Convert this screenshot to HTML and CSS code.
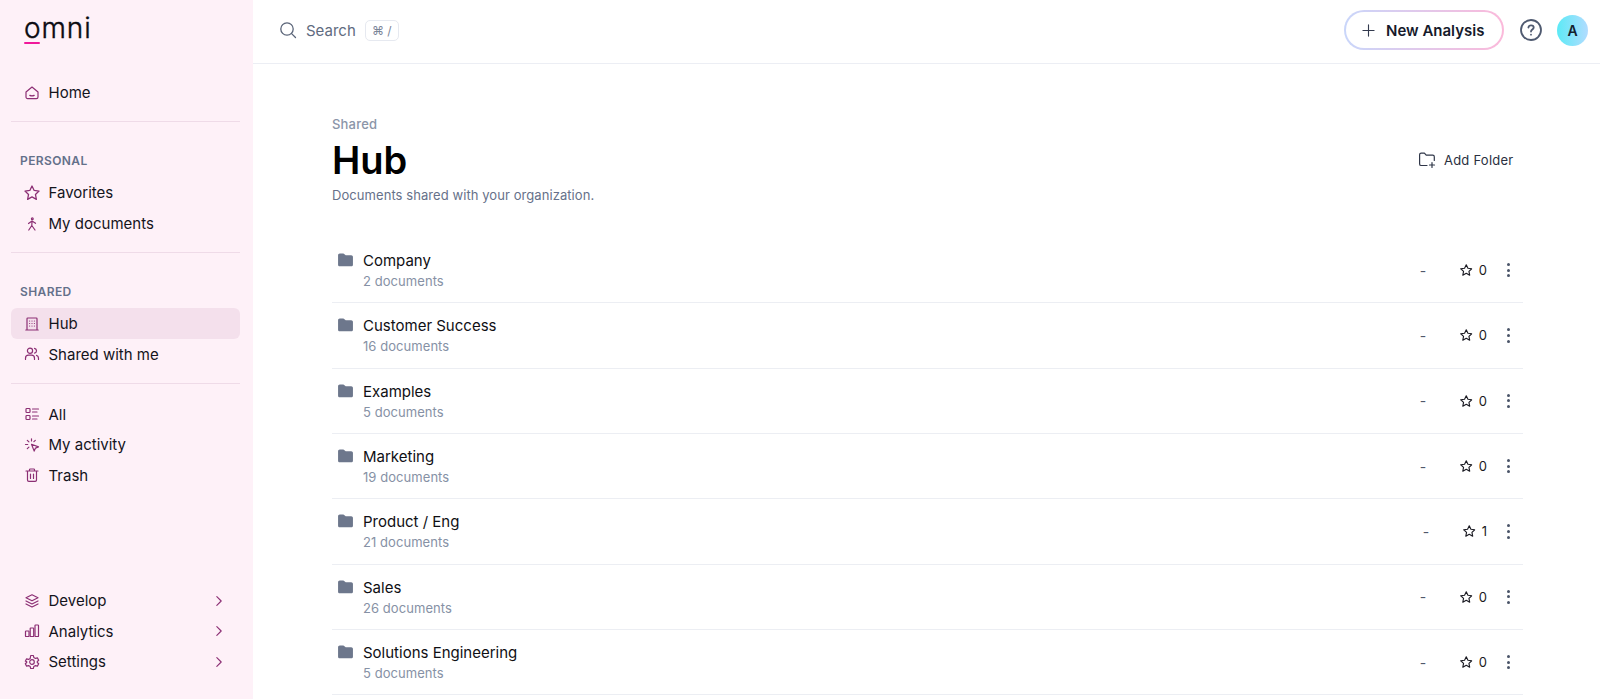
FILE: index.html
```html
<!DOCTYPE html>
<html lang="en">
<head>
<meta charset="utf-8">
<title>Hub - Omni</title>
<link rel="stylesheet" href="styles.css">
</head>
<body>
<svg class="defs" aria-hidden="true">
  <symbol id="i-star" viewBox="2 2 20 20"><path d="M12 3.200l2.700 5.600 6.100.8-4.500 4.200 1.200 6.100-5.500-3-5.500 3 1.200-6.100-4.500-4.200 6.100-.8z"/></symbol>
  <symbol id="i-chev" viewBox="0 0 16 16"><path d="M5.500 3l5 5-5 5"/></symbol>
  <symbol id="i-folder" viewBox="0 0 16 16"><path d="M1 3.100C1 2.200 1.700 1.500 2.600 1.500h3.200c.5 0 .9.2 1.200.5L8.200 3.100h5.200c.9 0 1.600.7 1.600 1.600v7.200c0 .9-.7 1.600-1.600 1.600H2.600c-.9 0-1.600-.7-1.600-1.600z"/></symbol>
</svg>
<div class="app">
  <aside class="sidebar">
    <div class="logo"><span class="logo-word">omni</span><span class="logo-bar"></span></div>
    <nav class="group">
      <a class="item"><svg class="ico" viewBox="0 0 16 16"><path d="M2 7l6-5 6 5v5c0 .9-.7 1.600-1.600 1.600H3.600C2.700 13.600 2 12.900 2 12z"/><path d="M5.800 10.400c1.300.6 3.100.6 4.400 0"/></svg>Home</a>
    </nav>
    <nav class="group">
      <div class="label">PERSONAL</div>
      <a class="item"><svg class="ico ico-star"><use href="#i-star"/></svg>Favorites</a>
      <a class="item"><svg class="ico" viewBox="0 0 16 16"><circle cx="8.300" cy="2.800" r=".9"/><path d="M4.500 7.500L8 5l3.500 2.300M8 5l-.2 4.500M7.800 9.500L4.800 14M7.800 9.500l3.200 4.500"/></svg>My documents</a>
    </nav>
    <nav class="group">
      <div class="label">SHARED</div>
      <a class="item active"><svg class="ico" viewBox="0 0 16 16"><path d="M3 14V2.800c0-.5.300-.8.800-.8h8.400c.5 0 .8.300.8.800V14M1.800 14h12.400"/><path class="dots" d="M5.600 5h.01M8 5h.01M10.400 5h.01M5.600 7.500h.01M8 7.500h.01M10.400 7.500h.01M5.600 10h.01M8 10h.01M10.400 10h.01"/></svg>Hub</a>
      <a class="item"><svg class="ico" viewBox="0 0 16 16"><circle cx="6" cy="4.800" r="2.600"/><path d="M1.500 13.500v-1.300c0-1.700 1.300-3 3-3h3c1.700 0 3 1.300 3 3v1.300M10.500 2.400c1.200.3 2 1.300 2 2.400s-.8 2.100-2 2.400M12.500 9.400c1.200.4 2 1.500 2 2.800v1.300"/></svg>Shared with me</a>
    </nav>
    <nav class="group plain">
      <a class="item"><svg class="ico" viewBox="0 0 16 16"><rect x="2" y="2.500" width="4" height="4" rx=".8"/><rect x="2" y="9.500" width="4" height="4" rx=".8"/><path d="M8.500 3h6M8.500 6h4.500M8.500 10h6M8.500 13h4.500"/></svg>All</a>
      <a class="item"><svg class="ico" viewBox="0 0 16 16"><path d="M7.500 1.800v2.200M3.300 3.300l1.600 1.600M1.500 7.500h2.200M3.300 11.700l1.600-1.600M11.300 3.300l-1.400 1.400"/><path d="M7.500 7.300l7 2.600-3 1.200-1.300 3z"/></svg>My activity</a>
      <a class="item"><svg class="ico" viewBox="0 0 16 16"><path d="M2 4h12M5.500 4V2.800c0-.5.300-.8.800-.8h3.400c.5 0 .8.300.8.800V4M3.500 4v9c0 .8.500 1.300 1.300 1.300h6.400c.8 0 1.300-.5 1.300-1.300V4M6.500 7v4.500M9.500 7v4.500"/></svg>Trash</a>
    </nav>
    <nav class="group bottom">
      <a class="item"><svg class="ico" viewBox="0 0 16 16"><path d="M8 1.800l6 3-6 3-6-3z"/><path d="M2 8l6 3 6-3M2 11l6 3 6-3"/></svg>Develop<svg class="chev"><use href="#i-chev"/></svg></a>
      <a class="item"><svg class="ico" viewBox="0 0 16 16"><rect x="1.500" y="8" width="3.500" height="5.500" rx=".6"/><rect x="6.200" y="5" width="3.500" height="8.500" rx=".6"/><rect x="11" y="2" width="3.500" height="11.500" rx=".6"/></svg>Analytics<svg class="chev"><use href="#i-chev"/></svg></a>
      <a class="item"><svg class="ico" viewBox="0 0 16 16"><circle cx="8" cy="8" r="2.300"/><path d="M6.700 1.500h2.600l.5 1.900 1.700 1 1.900-.5 1.300 2.300-1.400 1.300v1l1.400 1.300-1.300 2.300-1.900-.5-1.700 1-.5 1.900H6.700l-.5-1.900-1.700-1-1.900.5-1.300-2.300 1.400-1.300v-1L1.300 7.200l1.300-2.300 1.900.5 1.700-1z"/></svg>Settings<svg class="chev"><use href="#i-chev"/></svg></a>
    </nav>
  </aside>
  <div class="main">
    <header class="topbar">
      <div class="search">
        <svg class="search-ico" viewBox="0 0 18 18"><circle cx="8" cy="8" r="6.200"/><path d="M12.600 12.600L16.500 16.500"/></svg>
        <span class="search-text">Search</span>
        <span class="kbd">⌘ /</span>
      </div>
      <div class="actions">
        <button class="new-btn"><svg class="plus" viewBox="0 0 14 14"><path d="M7 1v12M1 7h12"/></svg>New Analysis</button>
        <svg class="help" viewBox="0 0 24 24"><circle cx="12" cy="12" r="10"/><path d="M9.400 9.500c.2-1.400 1.300-2.200 2.700-2.200 1.500 0 2.600.9 2.600 2.200 0 2-2.700 2.100-2.700 4"/><path d="M12 16.700h.01"/></svg>
        <div class="avatar">A</div>
      </div>
    </header>
    <main class="content">
      <div class="head">
        <div>
          <div class="crumb">Shared</div>
          <h1 class="title">Hub</h1>
          <p class="desc">Documents shared with your organization.</p>
        </div>
        <a class="add-folder"><svg class="add-ico" viewBox="0 0 18 18"><path d="M9 14.500H3.200c-.9 0-1.600-.7-1.600-1.600V3.700c0-.9.700-1.600 1.600-1.600h3.200l1.800 2h6.500c.9 0 1.600.7 1.600 1.600v3.800"/><path d="M14 11.500v5M11.500 14h5"/></svg>Add Folder</a>
      </div>
      <div class="list">
        <div class="row"><svg class="folder"><use href="#i-folder"/></svg><div class="info"><div class="name">Company</div><div class="count">2 documents</div></div><span class="dash">-</span><svg class="star"><use href="#i-star"/></svg><span class="num">0</span><span class="more"><i></i><i></i><i></i></span></div>
        <div class="row"><svg class="folder"><use href="#i-folder"/></svg><div class="info"><div class="name">Customer Success</div><div class="count">16 documents</div></div><span class="dash">-</span><svg class="star"><use href="#i-star"/></svg><span class="num">0</span><span class="more"><i></i><i></i><i></i></span></div>
        <div class="row"><svg class="folder"><use href="#i-folder"/></svg><div class="info"><div class="name">Examples</div><div class="count">5 documents</div></div><span class="dash">-</span><svg class="star"><use href="#i-star"/></svg><span class="num">0</span><span class="more"><i></i><i></i><i></i></span></div>
        <div class="row"><svg class="folder"><use href="#i-folder"/></svg><div class="info"><div class="name">Marketing</div><div class="count">19 documents</div></div><span class="dash">-</span><svg class="star"><use href="#i-star"/></svg><span class="num">0</span><span class="more"><i></i><i></i><i></i></span></div>
        <div class="row"><svg class="folder"><use href="#i-folder"/></svg><div class="info"><div class="name">Product / Eng</div><div class="count">21 documents</div></div><span class="dash">-</span><svg class="star"><use href="#i-star"/></svg><span class="num">1</span><span class="more"><i></i><i></i><i></i></span></div>
        <div class="row"><svg class="folder"><use href="#i-folder"/></svg><div class="info"><div class="name">Sales</div><div class="count">26 documents</div></div><span class="dash">-</span><svg class="star"><use href="#i-star"/></svg><span class="num">0</span><span class="more"><i></i><i></i><i></i></span></div>
        <div class="row"><svg class="folder"><use href="#i-folder"/></svg><div class="info"><div class="name">Solutions Engineering</div><div class="count">5 documents</div></div><span class="dash">-</span><svg class="star"><use href="#i-star"/></svg><span class="num">0</span><span class="more"><i></i><i></i><i></i></span></div>
      </div>
    </main>
  </div>
</div>
</body>
</html>
```
FILE: styles.css
```css
* { box-sizing: border-box; }
html, body { margin: 0; height: 100%; overflow: hidden; }
body { font-family: Inter, "Liberation Sans", sans-serif; color: #0f0f14; background: #fff; }
.defs { display: none; }
.app { display: flex; height: 699px; }

.sidebar { width: 253px; flex: none; background: #fef1f8; padding: 0 13px 21.700px 11px; display: flex; flex-direction: column; }
.logo { height: 77.500px; padding: 11.500px 0 0 13px; display: flex; flex-direction: column; }
.logo-word { font-size: 28px; font-weight: 300; line-height: 32px; color: #0b0b12; letter-spacing: .9px; -webkit-text-stroke: .4px #0b0b12; }
.logo-bar { width: 16px; height: 2px; background: #f0189a; border-radius: 1px; margin-top: -2px; }
.group { padding-bottom: 13px; border-bottom: 1px solid #efdbe8; margin-bottom: 31px; }
.group.plain { border-bottom: 0; margin: -16px 0 0; }
.group.bottom { border-bottom: 0; margin: auto 0 0; padding: 0; }
.label { font-size: 12px; font-weight: 600; letter-spacing: .4px; color: #64708a; line-height: 16px; padding-left: 9px; margin-bottom: 8.500px; }
.item { display: flex; align-items: center; height: 30.670px; padding-left: 13px; border-radius: 6px; font-size: 15px; color: #14141c; }
.item.active { background: #f4e0ec; }
.ico { width: 16px; height: 16px; margin-right: 8.500px; fill: none; stroke: #8c2f74; stroke-width: 1.200; stroke-linecap: round; stroke-linejoin: round; flex: none; }
.ico-star { stroke-width: 1.600; }
.ico .dots { stroke-width: 1.200; }
.chev { width: 14px; height: 14px; margin-left: auto; margin-right: 14px; fill: none; stroke: #8c2f74; stroke-width: 1.300; stroke-linecap: round; stroke-linejoin: round; }

.main { flex: 1; min-width: 0; display: flex; flex-direction: column; }
.topbar { height: 64px; flex: none; border-bottom: 1px solid #eceef4; display: flex; align-items: center; justify-content: space-between; padding: 0 12px 3px 26px; }
.search { display: flex; align-items: center; }
.search-ico { width: 18px; height: 18px; fill: none; stroke: #5a6478; stroke-width: 1.300; stroke-linecap: round; margin-right: 9px; }
.search-text { font-size: 15px; color: #5f6b80; }
.kbd { margin-left: 9px; height: 21px; width: 34px; border: 1px solid #e6e9f0; border-radius: 5px; font-size: 12px; color: #7a8598; display: flex; align-items: center; justify-content: center; }
.actions { display: flex; align-items: center; }
.new-btn { width: 160px; height: 40px; border: 2px solid transparent; border-radius: 20px; background: linear-gradient(#fff, #fff) padding-box, linear-gradient(90deg, #c9d6fa, #fbb9da) border-box; font: 600 15px Inter, "Liberation Sans", sans-serif; color: #161a2b; display: flex; align-items: center; padding: 0 0 0 16px; }
.plus { width: 13px; height: 13px; margin-right: 11px; fill: none; stroke: #333a4e; stroke-width: 1.200; stroke-linecap: round; }
.help { width: 24px; height: 24px; margin-left: 15px; fill: none; stroke: #4f5a70; stroke-width: 1.800; stroke-linecap: round; }
.avatar { width: 31px; height: 31px; margin-left: 14px; border-radius: 50%; background: linear-gradient(90deg, #5ceaf6, #b2dcff); display: flex; align-items: center; justify-content: center; font-size: 14px; font-weight: 600; color: #15202e; }

.content { flex: 1; padding: 52px 77px 0 79px; min-height: 0; overflow: hidden; }
.head { display: flex; justify-content: space-between; align-items: center; margin-bottom: 34px; }
.crumb { font-size: 13px; font-weight: 500; letter-spacing: .2px; color: #8b95a8; line-height: 17px; }
.title { margin: 3px 0 2px; font-size: 38px; font-weight: 600; line-height: 48px; color: #000; }
.desc { margin: 0; font-size: 13px; color: #66718a; line-height: 18px; letter-spacing: .07px; }
.add-folder { display: flex; align-items: center; font-size: 13px; font-weight: 400; letter-spacing: .25px; color: #2a3040; padding-right: 9.500px; }
.add-ico { width: 18px; height: 18px; margin-right: 8px; fill: none; stroke: #2f3648; stroke-width: 1.200; stroke-linecap: round; stroke-linejoin: round; }

.row { height: 65.330px; border-bottom: 1px solid #eceef3; display: flex; align-items: center; padding-left: 5px; }
.folder { width: 17px; height: 17px; fill: #6d778c; align-self: flex-start; margin-top: 14px; margin-right: 9px; flex: none; }
.info { flex: 1; min-width: 0; padding-top: 2px; }
.name { font-size: 15px; line-height: 20px; color: #0f0f14; }
.count { font-size: 13px; letter-spacing: .06px; line-height: 20px; color: #8691a5; }
.dash { font-size: 14px; color: #50586a; margin-right: 34px; }
.star { width: 12.500px; height: 12.500px; fill: none; stroke: #1a1a22; stroke-width: 1.800; stroke-linejoin: round; margin-right: 6px; }
.num { font-size: 13px; color: #1a1a22; margin-right: 2px; }
.more { display: flex; flex-direction: column; gap: 2.700px; margin: 0 13px 0 18px; width: 3px; }
.more i { width: 3px; height: 3px; border-radius: 50%; background: #4a5468; }
```
